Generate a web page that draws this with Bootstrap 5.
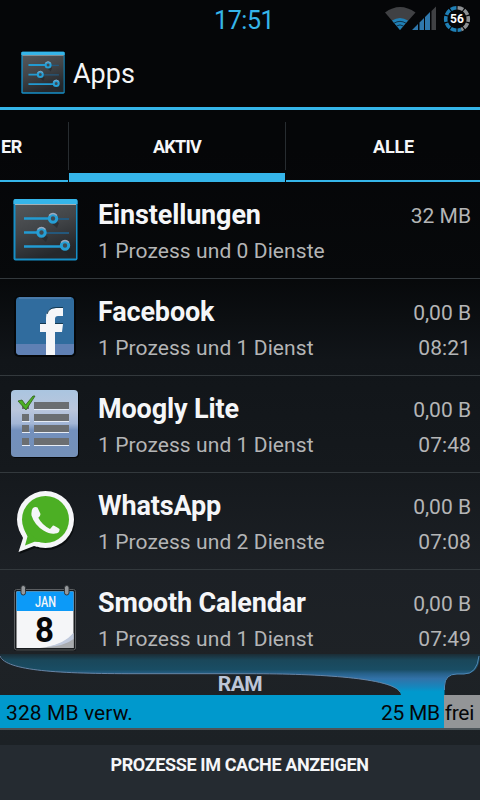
<!DOCTYPE html>
<html lang="de">
<head>
    <meta charset="UTF-8">
    <meta name="viewport" content="width=device-width, initial-scale=1.0">
    <title>Apps</title>

    <!-- Bootstrap -->
    <link href="https://cdn.jsdelivr.net/npm/bootstrap@5.3.0/dist/css/bootstrap.min.css" rel="stylesheet">
    <script src="https://cdn.jsdelivr.net/npm/bootstrap@5.3.0/dist/js/bootstrap.bundle.min.js"></script>

    <style>
        body {
            height: 800px;
            font-family: Roboto, "Liberation Sans", sans-serif;
            color: #f5f6f8;
            background: #050608;
        }

        .screen {
            width: 480px;
            height: 800px;
            line-height: 1;
            white-space: nowrap;
            background: linear-gradient(#050608 0, #050608 150px, #07090b 280px, #111519 360px, #15191d 470px, #1c2025 570px, #1e2226 660px, #1c2125 745px);
        }

        /* Status bar */
        .status-bar {
            height: 38px;
        }

        .clock {
            padding: 2px 0 0 214px;
            font-size: 25px;
            letter-spacing: -.4px;
            color: #35b5e9;
        }

        /* Title bar */
        .title-bar {
            height: 72px;
            padding-left: 21px;
            border-bottom: 3px solid #35b5e9;
            font-size: 27px;
        }

        .title-bar span {
            margin-left: 8px;
            padding-top: 3px;
        }

        /* Tabs */
        .tab-strip {
            height: 72px;
            font-size: 18px;
            font-weight: 700;
        }

        .tab-strip .nav-link {
            height: 72px;
            padding: 4px 0 0;
            color: #f5f6f8;
            border-bottom: 2px solid #35b5e9;
            border-radius: 0;
        }

        .tab-strip .nav-link.active {
            width: 216px;
            padding-top: 11px;
            border-bottom-width: 9px;
            letter-spacing: -.7px;
        }

        .tab-strip .tab-first {
            width: 68px;
            padding-left: 1px;
            letter-spacing: -.3px;
        }

        .tab-strip .tab-last {
            width: 194px;
            padding-left: 21px;
            letter-spacing: -.2px;
        }

        .tab-line {
            width: 1px;
            height: 48px;
            margin-top: 12px;
            background: #272c30;
        }

        /* Process list */
        .process-list {
            height: 472px;
        }

        .process-row {
            height: 97px;
            flex-shrink: 0;
            padding-right: 9px;
            border-bottom: 1px solid #33393d;
            font-size: 21px;
            color: #b4b5b6;
        }

        .process-row svg {
            width: 98px;
            height: 96px;
            flex-shrink: 0;
        }

        .process-text {
            padding-top: 20px;
            letter-spacing: .08px;
        }

        .process-name {
            height: 39px;
            font-size: 27px;
            font-weight: 700;
            letter-spacing: -.15px;
            color: #f5f6f8;
        }

        .process-size {
            height: 36px;
            padding-top: 4px;
            letter-spacing: 0;
        }

        .process-time {
            padding-top: 3px;
        }

        /* RAM */
        .ram-head {
            height: 41px;
        }

        .ram-head span {
            padding-top: 20px;
            font-size: 21px;
            font-weight: 700;
            letter-spacing: -.5px;
            color: #bdc6d8;
        }

        .ram-bar {
            height: 35px;
            padding: 3px 6px 0 6px;
            font-size: 21px;
            letter-spacing: .1px;
            color: #050608;
            background: linear-gradient(90deg, #0099cd 444px, #939597 444px);
            border-bottom: 2px solid #4c5459;
        }

        .ram-free {
            letter-spacing: -.3px;
        }

        .cache-btn {
            height: 55px;
            margin-top: 15px;
            padding: 0 1px 15px 0;
            font-size: 18px;
            font-weight: 700;
            line-height: 1;
            letter-spacing: -.37px;
            color: #f5f6f8;
            background: #252b31;
            border: 0;
        }
    </style>
</head>
<body>

<div class="screen d-flex flex-column overflow-hidden">

    <div class="status-bar d-flex align-items-center">
        <span class="clock flex-grow-1">17:51</span>
        <svg width="96" height="38" viewBox="384 0 96 38">
            <path d="M385 12.500Q400 1.500 415.500 12.500L400 30z" fill="#404144"/>
            <path d="M392 20.500Q400 15.500 408 20.500L400 30z" fill="#1f7fb5"/>
            <path d="M394 23.200Q400 19.500 406 23.200M396.500 26Q400 23.800 403.500 26" fill="none" stroke="#0c1c28" stroke-width=".8"/>
            <path d="M412 30L418 24V30zM419.500 30V22.500L424 18V30zM425 30V17L430 12V30z" fill="#2f78ad"/>
            <path d="M431.500 30V11L436 6.500V30z" fill="#404144"/>
            <g fill="none" stroke-width="3.600" transform="rotate(-90 457 19)">
                <circle cx="457" cy="19" r="11.300" pathLength="120" stroke="#8d9093" stroke-dasharray="10 2 10 2 10 2 10 2 4 72" stroke-dashoffset="-1"/>
                <circle cx="457" cy="19" r="11.300" pathLength="120" stroke="#1f7fb5" stroke-dasharray="6 2 10 2 10 2 10 2 10 2 10 54" stroke-dashoffset="-53"/>
            </g>
            <text x="457" y="23.400" text-anchor="middle" font-size="12" font-weight="700" fill="#fff">56</text>
        </svg>
    </div>

    <div class="title-bar d-flex align-items-center">
        <svg width="44" height="43" viewBox="13 16 65 63" preserveAspectRatio="none">
            <linearGradient id="panel" x1="0" y1="0" x2="0.4" y2="1">
                <stop offset="0" stop-color="#55585b"/>
                <stop offset="0.5" stop-color="#424548"/>
                <stop offset="1" stop-color="#25282c"/>
            </linearGradient>
            <g id="settings-icon">
                <rect x="13.500" y="17" width="64" height="61.500" rx="2" fill="#168fc7"/>
                <path d="M15.500 22H76V76.500H15.500z" fill="url(#panel)"/>
                <path d="M13.500 22V19Q13.500 17 15.500 17H75.500Q77.500 17 77.500 19V22z" fill="#35b5e9"/>
                <path d="M15 22.500H76" stroke="#a5b0b5"/>
                <path d="M51 41L57 46L59 41L55 38zM40 55L46 60L48 55L44 52zM62 68L69 75H75V70L69 65z" fill="#22262a" opacity=".6"/>
                <path d="M53 37H69M41 51H69" stroke="#24587c" stroke-width="2"/>
                <path d="M24 36.500H50M24 50.500H39M24 64.500H62" stroke="#229bd2" stroke-width="2.600"/>
                <g fill="#414a51" stroke="#269fd5" stroke-width="3">
                    <circle cx="53" cy="36.500" r="3.700"/>
                    <circle cx="41.500" cy="50.500" r="3.700"/>
                    <circle cx="65" cy="63.500" r="3.700"/>
                </g>
                <path d="M49 33.500Q53 29.500 57 33.500M37.500 47.500Q41.500 43.500 45.500 47.500M61 60.500Q65 56.500 69 60.500" fill="none" stroke="#9aa8bd" stroke-width="1.200"/>
            </g>
        </svg>
        <span>Apps</span>
    </div>

    <nav class="tab-strip nav flex-nowrap">
        <a class="nav-link tab-first d-flex align-items-center">ER</a>
        <div class="tab-line"></div>
        <a class="nav-link active d-flex align-items-center justify-content-center">AKTIV</a>
        <div class="tab-line"></div>
        <a class="nav-link tab-last d-flex align-items-center justify-content-center">ALLE</a>
    </nav>

    <div class="process-list d-flex flex-column overflow-hidden">
        <div class="process-row d-flex">
            <svg viewBox="0 0 98 96"><use href="#settings-icon"/></svg>
            <div class="process-text flex-grow-1">
                <div class="process-name">Einstellungen</div>
                <div>1 Prozess und 0 Dienste</div>
            </div>
            <div class="process-text text-end">
                <div class="process-size">32 MB</div>
            </div>
        </div>

        <div class="process-row d-flex">
            <svg viewBox="0 0 98 96">
                <rect x="14" y="17" width="62" height="61" rx="5" fill="#050709"/>
                <rect x="16" y="18" width="58" height="58" rx="4" fill="#306c9e"/>
                <path d="M16 65H74V72Q74 76 70 76H20Q16 76 16 72z" fill="#5f80b4"/>
                <path d="M19 19H71" stroke="#6489b5"/>
                <path d="M46 76V53H40V45H46V39Q46 29 56 29H63V37H58Q55 37 55 40V45H63L62 53H55V76z" fill="#f5f6f8"/>
                <path d="M40 44.500H46M55 44.500H63M47 35Q49 28.500 56 28.500H63" fill="none" stroke="#153a52"/>
            </svg>
            <div class="process-text flex-grow-1">
                <div class="process-name">Facebook</div>
                <div>1 Prozess und 1 Dienst</div>
            </div>
            <div class="process-text text-end">
                <div class="process-size">0,00 B</div>
                <div class="process-time">08:21</div>
            </div>
        </div>

        <div class="process-row d-flex">
            <svg viewBox="0 0 98 96">
                <linearGradient id="sheet" x1="0" y1="0" x2="0" y2="1">
                    <stop offset="0" stop-color="#aac5e0"/>
                    <stop offset=".3" stop-color="#bac6dc"/>
                    <stop offset=".5" stop-color="#a3b6d6"/>
                    <stop offset=".6" stop-color="#7390bd"/>
                    <stop offset="1" stop-color="#7490b8"/>
                </linearGradient>
                <rect x="12" y="15" width="67" height="67" rx="4" fill="#050709"/>
                <rect x="11" y="14" width="67" height="67" rx="4" fill="url(#sheet)"/>
                <path d="M34 26H69V33H34zM34 38H69V45H34zM34 49H69V56H34zM34 62H69V69H34zM22 38H29V45H22zM22 49H29V56H22zM22 62H29V69H22zM22 29H29V33H22z" fill="#6b6e71"/>
                <path d="M34 33.500H69M34 45.500H69M34 56.500H69M34 69.500H69M22 45.500H30M22 56.500H30M22 69.500H30" stroke="#e6ecf5"/>
                <path d="M18 25L22 24L25.500 29L33 20H35L26 34z" fill="#4cb023" stroke="#30601c" stroke-width=".8"/>
            </svg>
            <div class="process-text flex-grow-1">
                <div class="process-name">Moogly Lite</div>
                <div>1 Prozess und 1 Dienst</div>
            </div>
            <div class="process-text text-end">
                <div class="process-size">0,00 B</div>
                <div class="process-time">07:48</div>
            </div>
        </div>

        <div class="process-row d-flex">
            <svg viewBox="0 0 98 96">
                <g fill="#0b0e10" transform="translate(1 2)">
                    <circle cx="45.500" cy="46.500" r="28.500"/>
                    <path d="M18.500 79L24.500 60L38 73.500L34 73z"/>
                </g>
                <g fill="#f5f6f8">
                    <circle cx="45.500" cy="46.500" r="28.500"/>
                    <path d="M18.500 79L23 65Q22 62 20 59L38 74L34 73z"/>
                </g>
                <g fill="#4caf24">
                    <circle cx="45.500" cy="46.500" r="23.500"/>
                    <path d="M25 72.500L27.500 63.500L24 56L40 69L34.500 68.800z"/>
                </g>
                <path d="M33 35Q35 33.500 37.500 34.500L40.500 41Q40.500 43 38.300 44.800Q42 52 50 56L53 52.500Q54 52 59.500 56Q60 60 55 60.500Q50.500 61.500 43.500 57.500Q34.500 52 31.500 42.500Q31 37 33 35z" fill="#f5f6f8"/>
            </svg>
            <div class="process-text flex-grow-1">
                <div class="process-name">WhatsApp</div>
                <div>1 Prozess und 2 Dienste</div>
            </div>
            <div class="process-text text-end">
                <div class="process-size">0,00 B</div>
                <div class="process-time">07:08</div>
            </div>
        </div>

        <div class="process-row d-flex">
            <svg viewBox="0 0 98 96">
                <rect x="14" y="19" width="62" height="62" rx="2" fill="#0b0d0f"/>
                <rect x="14.500" y="19.500" width="61" height="60.500" rx="2" fill="#191c1f" stroke="#5b5e61"/>
                <path d="M16.500 21.500H73.500V78H16.500z" fill="#f5f6f8"/>
                <path d="M16.500 21.500H73.500V41H16.500z" fill="#0c9af8"/>
                <path d="M73.500 63V78H40Q64 76 73.500 63z" fill="#a9acaf"/>
                <path d="M73.500 63Q64 74 46 77Q65 76 73.500 69z" fill="#c0cadd"/>
                <g fill="#96999c" stroke="#33373a" stroke-width="1">
                    <rect x="21" y="15.500" width="4.500" height="9.500" rx="2.200"/>
                    <rect x="64.500" y="15.500" width="4.500" height="9.500" rx="2.200"/>
                </g>
                <text x="45.500" y="36.500" text-anchor="middle" font-size="14" font-weight="500" fill="#f5f6f8" textLength="21" lengthAdjust="spacingAndGlyphs">JAN</text>
                <text x="44.500" y="71.500" text-anchor="middle" font-size="35" font-weight="700" fill="#050608" textLength="19" lengthAdjust="spacingAndGlyphs">8</text>
            </svg>
            <div class="process-text flex-grow-1">
                <div class="process-name">Smooth Calendar</div>
                <div>1 Prozess und 1 Dienst</div>
            </div>
            <div class="process-text text-end">
                <div class="process-size">0,00 B</div>
                <div class="process-time">07:49</div>
            </div>
        </div>
    </div>

    <div class="ram-head position-relative text-center">
        <svg class="position-absolute top-0 start-0" width="480" height="41" viewBox="0 0 480 41">
            <linearGradient id="flow" x1="0" y1="0" x2="0" y2="1">
                <stop offset="0" stop-color="#1b2c35"/>
                <stop offset=".15" stop-color="#1a475a"/>
                <stop offset=".38" stop-color="#194d64"/>
                <stop offset=".48" stop-color="#27618a"/>
                <stop offset=".6" stop-color="#3272a8"/>
                <stop offset=".8" stop-color="#1686bd"/>
                <stop offset=".92" stop-color="#0099cd"/>
            </linearGradient>
            <path d="M0 0C3 17 60 19.700 135 19.700H250C320 19.700 401 24 401 41H444.500V32Q445 20 457 20H464Q480 20 480 0z" fill="url(#flow)"/>
            <path d="M0 2C6 17 60 19.700 135 19.700H250C320 19.700 392 24 400 38" fill="none" stroke="#6785a6"/>
            <path d="M444.500 36V32Q445 20 457 20H464Q477 20 479 2" fill="none" stroke="#4e87b5"/>
        </svg>
        <span class="position-relative d-block">RAM</span>
    </div>

    <div class="ram-bar d-flex align-items-center justify-content-between">
        <span>328 MB verw.</span>
        <span class="ram-free">25 MB frei</span>
    </div>

    <button class="cache-btn btn rounded-0 w-100">PROZESSE IM CACHE ANZEIGEN</button>

</div>

</body>
</html>
